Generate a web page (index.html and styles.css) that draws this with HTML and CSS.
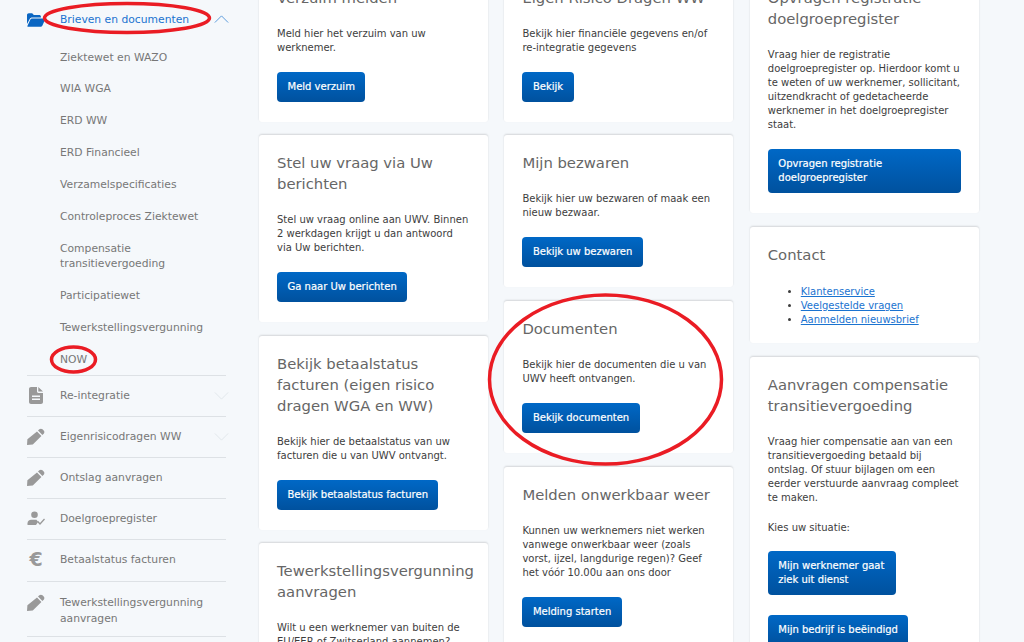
FILE: index.html
```html
<!DOCTYPE html>
<html lang="nl">
<head>
<meta charset="utf-8">
<title>Werkgeversportaal</title>
<link rel="stylesheet" href="styles.css">
</head>
<body>
<div class="page">
  <nav class="side">
    <div class="item item-open">
      <svg class="ico ico-folder" viewBox="0 0 18 14"><path d="M0 2.2C0 1 .8.3 1.8.3h3.4l1.6 1.6h5.4c1 0 1.7.7 1.7 1.7v.8H5.2c-1.2 0-2 .5-2.5 1.5L0 11z"/><path d="M5 5.6h12c.8 0 1.2.6.9 1.3l-2.6 5.9c-.3.7-.9 1-1.6 1H1.2c-.7 0-1-.5-.7-1.1l2.9-6.1c.3-.6.9-1 1.6-1z"/></svg>
      <span class="lbl lbl-open">Brieven en documenten</span>
      <svg class="chev chev-open" viewBox="0 0 16 9"><path d="M.5 8.5 8 1l7.500 7.500"/></svg>
    </div>
    <ul class="sub">
      <li>Ziektewet en WAZO</li>
      <li>WIA WGA</li>
      <li>ERD WW</li>
      <li>ERD Financieel</li>
      <li>Verzamelspecificaties</li>
      <li>Controleproces Ziektewet</li>
      <li class="two">Compensatie transitievergoeding</li>
      <li>Participatiewet</li>
      <li>Tewerkstellingsvergunning</li>
      <li>NOW</li>
    </ul>
    <div class="item row">
      <svg class="ico" viewBox="0 0 14 17"><path d="M2 0h6v4.500c0 .8.600 1.400 1.400 1.400H14V15c0 1.100-.9 2-2 2H2c-1.100 0-2-.9-2-2V2C0 .9.900 0 2 0zm7.300 0L14 4.600H9.300zM3 8.500v1.400h8V8.500zm0 3v1.400h8v-1.400z" fill-rule="evenodd"/></svg>
      <span class="lbl">Re-integratie</span>
      <svg class="chev" viewBox="0 0 16 9"><path d="M.5.500 8 8 15.500.500"/></svg>
    </div>
    <div class="item row">
      <svg class="ico" viewBox="0 0 18 17"><path d="M12.300 1.300c.9-.9 2.300-.9 3.200 0l1.200 1.200c.9.900.9 2.300 0 3.200l-1.300 1.300L11 2.600zM10 3.600l4.400 4.400-8.600 8.600-5.800.4.400-5.800z"/></svg>
      <span class="lbl">Eigenrisicodragen WW</span>
      <svg class="chev" viewBox="0 0 16 9"><path d="M.5.500 8 8 15.500.500"/></svg>
    </div>
    <div class="item row">
      <svg class="ico" viewBox="0 0 18 17"><path d="M12.300 1.300c.9-.9 2.300-.9 3.200 0l1.200 1.200c.9.900.9 2.300 0 3.200l-1.300 1.300L11 2.600zM10 3.600l4.400 4.400-8.600 8.600-5.800.4.400-5.800z"/></svg>
      <span class="lbl">Ontslag aanvragen</span>
    </div>
    <div class="item row">
      <svg class="ico" viewBox="0 0 18 14"><circle cx="7.500" cy="3.300" r="3.300"/><path d="M.5 13.500v-1.800c0-2 1.700-3.500 3.700-3.500h5.300L11 10.500l-2 3z"/><path class="tick" d="m10.500 9.800 2.500 2.700 4.500-5"/></svg>
      <span class="lbl">Doelgroepregister</span>
    </div>
    <div class="item row">
      <span class="ico ico-euro">€</span>
      <span class="lbl">Betaalstatus facturen</span>
    </div>
    <div class="item row row-two">
      <svg class="ico" viewBox="0 0 18 17"><path d="M12.300 1.300c.9-.9 2.300-.9 3.200 0l1.200 1.200c.9.900.9 2.300 0 3.200l-1.300 1.300L11 2.600zM10 3.600l4.400 4.400-8.600 8.600-5.800.4.400-5.800z"/></svg>
      <span class="lbl">Tewerkstellingsvergunning aanvragen</span>
    </div>
  </nav>

  <main class="cols">
    <div class="col col-1">
      <section class="card">
        <h2>Verzuim melden</h2>
        <p>Meld hier het verzuim van uw werknemer.</p>
        <a class="btn">Meld verzuim</a>
      </section>
      <section class="card">
        <h2>Stel uw vraag via Uw berichten</h2>
        <p>Stel uw vraag online aan UWV. Binnen 2 werkdagen krijgt u dan antwoord via Uw berichten.</p>
        <a class="btn">Ga naar Uw berichten</a>
      </section>
      <section class="card">
        <h2>Bekijk betaalstatus facturen (eigen risico dragen WGA en WW)</h2>
        <p>Bekijk hier de betaalstatus van uw facturen die u van UWV ontvangt.</p>
        <a class="btn">Bekijk betaalstatus facturen</a>
      </section>
      <section class="card">
        <h2>Tewerkstellingsvergunning aanvragen</h2>
        <p>Wilt u een werknemer van buiten de EU/EER of Zwitserland aannemen?</p>
      </section>
    </div>
    <div class="col col-2">
      <section class="card">
        <h2>Eigen Risico Dragen WW</h2>
        <p>Bekijk hier financiële gegevens en/of re-integratie gegevens</p>
        <a class="btn">Bekijk</a>
      </section>
      <section class="card">
        <h2>Mijn bezwaren</h2>
        <p>Bekijk hier uw bezwaren of maak een nieuw bezwaar.</p>
        <a class="btn">Bekijk uw bezwaren</a>
      </section>
      <section class="card">
        <h2>Documenten</h2>
        <p>Bekijk hier de documenten die u van UWV heeft ontvangen.</p>
        <a class="btn">Bekijk documenten</a>
      </section>
      <section class="card">
        <h2>Melden onwerkbaar weer</h2>
        <p>Kunnen uw werknemers niet werken vanwege onwerkbaar weer (zoals vorst, ijzel, langdurige regen)? Geef het vóór 10.00u aan ons door</p>
        <a class="btn">Melding starten</a>
      </section>
    </div>
    <div class="col col-3">
      <section class="card">
        <h2>Opvragen registratie doelgroepregister</h2>
        <p>Vraag hier de registratie doelgroepregister op. Hierdoor komt u te weten of uw werknemer, sollicitant, uitzendkracht of gedetacheerde werknemer in het doelgroepregister staat.</p>
        <a class="btn btn-block">Opvragen registratie doelgroepregister</a>
      </section>
      <section class="card c-contact">
        <h2>Contact</h2>
        <ul>
          <li><a>Klantenservice</a></li>
          <li><a>Veelgestelde vragen</a></li>
          <li><a>Aanmelden nieuwsbrief</a></li>
        </ul>
      </section>
      <section class="card">
        <h2>Aanvragen compensatie transitievergoeding</h2>
        <p class="tight">Vraag hier compensatie aan van een transitievergoeding betaald bij ontslag. Of stuur bijlagen om een eerder verstuurde aanvraag compleet te maken.</p>
        <p>Kies uw situatie:</p>
        <a class="btn btn-wrap">Mijn werknemer gaat ziek uit dienst</a>
        <a class="btn">Mijn bedrijf is beëindigd</a>
      </section>
    </div>
  </main>
</div>
<svg class="marks" viewBox="0 0 1024 642">
  <ellipse cx="127" cy="18" rx="82.500" ry="14.500"/>
  <ellipse cx="73.500" cy="359.500" rx="22" ry="12.500"/>
  <ellipse cx="605.500" cy="379.500" rx="116" ry="84.500"/>
</svg>
</body>
</html>
```
FILE: styles.css
```css
* { box-sizing: border-box; }
html, body { margin: 0; height: 642px; overflow: hidden; }
body {
  position: relative;
  background: #f5f8fb;
  font-family: "DejaVu Sans", Verdana, sans-serif;
  font-size: 10px;
  line-height: 14px;
  color: #3d3d3d;
}
.page { display: flex; align-items: flex-start; height: 642px; overflow: hidden; }

/* sidebar */
.side { width: 259px; flex: none; padding: 0 33px 0 27px; color: #777; font-size: 10.750px; }
.item { display: flex; align-items: center; position: relative; }
.item-open { height: 39px; }
.ico { width: 18px; height: 17px; flex: none; fill: #999; margin-right: 15px; }
.ico-folder { fill: #0a66c2; height: 14px; width: 18px; }
.ico-euro { font-size: 19px; line-height: 17px; color: #999; text-align: center; font-weight: 700; }
.tick { fill: none; stroke: #999; stroke-width: 1.300; }
.lbl { flex: 1; }
.lbl-open { color: #1a73d0; }
.chev { position: absolute; right: -3px; width: 15px; height: 8px; fill: none; stroke: #dfe5ea; stroke-width: 1; }
.chev-open { stroke: #4a90d9; top: 15px; }
.sub { list-style: none; margin: 0; padding: 2.600px 0 0 33px; }
.sub li { padding: 9px 0; height: 31.800px; line-height: 14px; }
.sub li.two { height: 47.500px; padding-right: 40px; line-height: 15px; padding-top: 9px; }
.sub li:last-child { padding-top: 10px; height: 31.600px; }
.row { border-top: 1px solid #dde1e5; height: 41.100px; }
.row .ico { margin-top: -1px; }
.row-two { height: 56px; align-items: flex-start; padding-top: 13px; line-height: 16px; border-bottom: 1px solid #dde1e5; }

/* cards */
.cols { display: flex; gap: 16.400px; align-items: flex-start; margin-top: -30px; }
.col { width: 229px; flex: none; display: flex; flex-direction: column; gap: 13.300px; }
.col-2 { gap: 13.400px; }
.col-2 .card:last-child { margin-top: .6px; }
.col-3 { gap: 14px; }
.card {
  background: #fff;
  border-radius: 3px;
  padding: 17px 18px 20px;
  box-shadow: 0 -1px 2px rgba(0, 0, 0, .14);
}
.card h2 { margin: 0 0 19px; font-size: 14.800px; line-height: 21px; font-weight: 400; color: #666; }
.card p { margin: 0 0 17px; }
.card p.tight { margin-bottom: 16px; }
.btn {
  display: inline-block;
  padding: 8px 10.500px;
  min-height: 30px;
  border-radius: 4px;
  background: linear-gradient(#0068c6, #00519e);
  color: #fff;
  -webkit-text-stroke: .2px #fff;
}
.btn-block { display: block; }
.btn-wrap { display: block; width: 128px; margin: -1px 0 20px; }
.c-contact { padding-bottom: 16px; }
.c-contact ul { margin: 20px 0 0; padding: 0 0 0 33px; }
.c-contact a { color: #1a73d0; text-decoration: underline; }

/* annotation ellipses */
.marks { position: absolute; inset: 0; width: 1024px; height: 642px; pointer-events: none; }
.marks ellipse { fill: none; stroke: #ea1c24; stroke-width: 3.500; }
```
